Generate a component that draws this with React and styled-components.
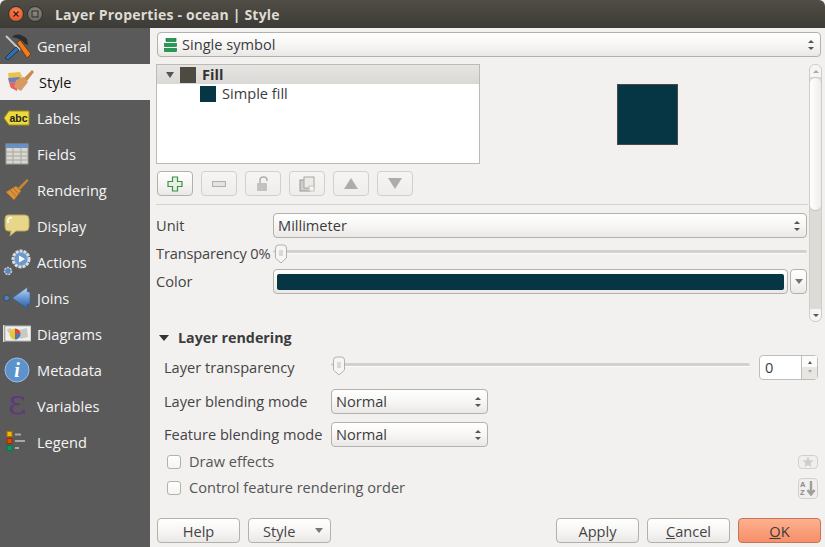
import React from "react";
import styled, { createGlobalStyle } from "styled-components";

const GlobalStyle = createGlobalStyle`
  html, body {
    margin: 0;
    padding: 0;
    background: #f2f1f0;
  }
  body {
    font-family: "Open Sans", "Noto Sans", "DejaVu Sans", sans-serif;
    font-size: 14.6px;
    color: #3c3c3c;
  }
`;

const Window = styled.div`
  width: 825px;
  height: 547px;
  display: flex;
  flex-direction: column;
  overflow: hidden;
  background: #f2f1f0;
`;

const TitleBar = styled.div`
  height: 28px;
  flex: none;
  display: flex;
  align-items: center;
  padding-left: 8px;
  background: linear-gradient(#504d46, #3d3b36);
  border-radius: 6px 6px 0 0;
`;

const WinButton = styled.div`
  width: 16px;
  height: 16px;
  margin-right: 3px;
  border-radius: 50%;
  display: flex;
  align-items: center;
  justify-content: center;
  background: ${(p) => (p.$close ? "radial-gradient(circle at 50% 35%, #f08a5a, #d9481f)" : "radial-gradient(circle at 50% 35%, #8b8984, #64625d)")};
  border: 1px solid #33312d;
  box-sizing: border-box;
`;

const Title = styled.div`
  margin-left: 9px;
  color: #dfdbd2;
  font-weight: 700;
  font-size: 14px;
  letter-spacing: 0.2px;
`;

const Body = styled.div`
  flex: 1;
  display: flex;
  min-height: 0;
`;

const Sidebar = styled.div`
  width: 150px;
  flex: none;
  background: #5a5a5a;
`;

const NavItem = styled.div`
  height: 36px;
  display: flex;
  align-items: center;
  padding-left: ${(p) => (p.$active ? "6px" : "3px")};
  background: ${(p) => (p.$active ? "#f2f1f0" : "transparent")};
  color: ${(p) => (p.$active ? "#111" : "#f4f4f4")};
`;

const NavIcon = styled.div`
  width: 28px;
  height: 28px;
  margin-right: ${(p) => (p.$active ? "5px" : "6px")};
  display: flex;
  align-items: center;
  justify-content: center;
  flex: none;
`;

const Main = styled.div`
  flex: 1;
  min-width: 0;
  display: flex;
  flex-direction: column;
  padding: 4px 4px 4px 6px;
`;

const buttonFace = `
  background: linear-gradient(#ffffff, #f6f5f4 55%, #e9e8e6);
  border: 1px solid #b4b0aa;
  border-radius: 4px;
  box-sizing: border-box;
`;

const Combo = styled.div`
  ${buttonFace}
  height: 25px;
  width: ${(p) => p.$width || "100%"};
  margin-left: ${(p) => p.$left || 0}px;
  display: flex;
  align-items: center;
  padding-left: ${(p) => p.$pad || "4px"};
  padding-right: 6px;
  gap: 4px;
  color: #3c3c3c;
  flex: none;
`;

const ComboText = styled.span`
  flex: 1;
  white-space: nowrap;
  margin-bottom: 2px;
`;

const UpDown = styled.div`
  display: flex;
  flex-direction: column;
  gap: 4px;
`;

const Triangle = styled.div`
  width: 0;
  height: 0;
  flex: none;
  border-left: ${(p) => p.$size || 3}px solid transparent;
  border-right: ${(p) => p.$size || 3}px solid transparent;
  ${(p) => (p.$up ? "border-bottom" : "border-top")}: ${(p) => p.$h || 3}px solid ${(p) => p.$color || "#555"};
`;

const ScrollPanel = styled.div`
  display: flex;
  margin-top: 7px;
  height: 258px;
  flex: none;
`;

const PanelContent = styled.div`
  width: 652px;
  flex: none;
`;

const TreeRow = styled.div`
  display: flex;
  height: 100px;
`;

const Tree = styled.div`
  width: 324px;
  height: 100px;
  box-sizing: border-box;
  background: #fff;
  border: 1px solid #bdbab5;
  flex: none;
`;

const TreeHeader = styled.div`
  height: 19px;
  display: flex;
  align-items: center;
  background: linear-gradient(#e6e5e3, #dad8d5);
  padding-left: 9px;
  font-weight: 700;
  color: #333;
`;

const TreeChild = styled.div`
  height: 19px;
  display: flex;
  align-items: center;
  padding-left: 43px;
  color: #3c3c3c;
`;

const TreeLabel = styled.span`
  margin-bottom: 2px;
`;

const Swatch = styled.div`
  width: 16px;
  height: 16px;
  background: ${(p) => p.$color};
  flex: none;
  margin-left: ${(p) => p.$before || 0}px;
  margin-right: 6px;
`;

const PreviewWrap = styled.div`
  flex: 1;
  display: flex;
  justify-content: center;
  padding-top: 20px;
`;

const Preview = styled.div`
  width: 61px;
  height: 61px;
  margin-left: 6px;
  background: #063543;
  border: 1px solid #4a4a44;
  box-sizing: border-box;
`;

const ToolRow = styled.div`
  display: flex;
  gap: 8px;
  margin: 7px 0 0 1px;
`;

const ToolButton = styled.div`
  ${buttonFace}
  width: 36px;
  height: 25px;
  display: flex;
  align-items: center;
  justify-content: center;
  ${(p) => p.$disabled && "border-color: #d3d0cc; background: linear-gradient(#f6f5f4, #eeedeb);"}
`;

const Separator = styled.div`
  height: 1px;
  background: #d5d3cf;
  margin-top: 8px;
`;

const FormGrid = styled.div`
  display: grid;
  grid-template-columns: 117px 1fr;
  margin-top: 8px;
  padding-right: 1px;
  align-items: center;
`;

const FormLabel = styled.div`
  height: ${(p) => p.$h}px;
  box-sizing: border-box;
  padding-bottom: 2px;
  display: flex;
  align-items: center;
  white-space: nowrap;
  color: #444;
  letter-spacing: ${(p) => (p.$tight ? "-0.15px" : "normal")};
`;

const SliderBox = styled.div`
  position: relative;
  height: ${(p) => p.$h || 31}px;
  display: flex;
  align-items: center;
  flex: 1;
`;

const SliderTrack = styled.div`
  width: 100%;
  height: 3px;
  margin-top: ${(p) => p.$top || 0}px;
  background: #d3d1cd;
  border-bottom: 1px solid #fbfbfa;
  border-radius: 2px;
`;

const Handle = styled.svg`
  position: absolute;
  left: ${(p) => p.$left || 0}px;
  top: ${(p) => p.$top || 0}px;
`;

const ColorRow = styled.div`
  display: flex;
  gap: 2px;
`;

const ColorButton = styled.div`
  ${buttonFace}
  flex: 1;
  height: 25px;
  padding: 4px 3px 3px;
`;

const ColorFill = styled.div`
  height: 100%;
  background: #063543;
  border-radius: 2px;
`;

const ColorDrop = styled.div`
  ${buttonFace}
  width: 17px;
  height: 25px;
  display: flex;
  align-items: center;
  justify-content: center;
`;

const Scrollbar = styled.div`
  width: 13px;
  margin-left: 1px;
  flex: none;
  height: 258px;
  border: 1px solid #cfccc8;
  border-radius: 6px;
  box-sizing: border-box;
  background: #dcdbd8;
  display: flex;
  flex-direction: column;
  overflow: hidden;
`;

const ScrollEnd = styled.div`
  height: 12px;
  flex: none;
  display: flex;
  align-items: center;
  justify-content: center;
  background: #f6f5f4;
`;

const ScrollThumb = styled.div`
  height: 132px;
  flex: none;
  background: linear-gradient(90deg, #fff, #eeedeb);
  border: 1px solid #c6c3bf;
  border-width: 1px 0;
  border-radius: 6px;
`;

const ScrollFill = styled.div`
  flex: 1;
`;

const SectionHeader = styled.div`
  display: flex;
  align-items: center;
  margin: 5px 0 0 3px;
  height: 22px;
  font-weight: 700;
  font-size: 14.3px;
  color: #3c3c3c;
  gap: 9px;
`;

const SectionTitle = styled.span`
  margin-bottom: 2px;
`;

const Section = styled.div`
  padding: 5px 0 0 8px;
  width: 662px;
  box-sizing: border-box;
`;

const Row = styled.div`
  display: flex;
  align-items: center;
  height: ${(p) => p.$h || 33}px;
  margin-top: ${(p) => p.$top || 0}px;
`;

const RowLabel = styled.div`
  width: 167px;
  flex: none;
  white-space: nowrap;
  color: #444;
  margin-bottom: ${(p) => (p.$lift ? "2px" : "0")};
`;

const SpinBox = styled.div`
  width: 59px;
  height: 25px;
  margin-left: 9px;
  box-sizing: border-box;
  background: #fff;
  border: 1px solid #c0bdb8;
  border-radius: 4px;
  display: flex;
  flex: none;
  color: #3c3c3c;
`;

const SpinValue = styled.div`
  flex: 1;
  padding-left: 5px;
  line-height: 23px;
`;

const SpinArrows = styled.div`
  width: 16px;
  border-left: 1px solid #c0bdb8;
  display: flex;
  flex-direction: column;
  align-items: center;
  justify-content: space-around;
  padding: 3px 0;
  box-sizing: border-box;
  background: linear-gradient(#fbfbfa 50%, #e7e6e3 50%);
`;

const CheckRow = styled.div`
  display: flex;
  align-items: center;
  padding-left: 3px;
  height: ${(p) => p.$h}px;
  color: #555;
`;

const CheckBox = styled.div`
  width: 14px;
  height: 14px;
  box-sizing: border-box;
  margin-right: 8px;
  border: 1px solid #b4b0aa;
  border-radius: 3px;
  background: linear-gradient(#fff, #f4f3f2);
`;

const CheckText = styled.span`
  flex: 1;
  margin-bottom: 2px;
`;

const MiniButton = styled.div`
  width: 20px;
  height: ${(p) => p.$h}px;
  box-sizing: border-box;
  border: 1px solid #d3d0cc;
  border-radius: 4px;
  background: #f0efed;
  display: flex;
  align-items: center;
  justify-content: center;
`;

const Footer = styled.div`
  display: flex;
  align-items: center;
  margin-top: auto;
  padding-left: 1px;
  gap: 8px;
`;

const FooterSpacer = styled.div`
  flex: 1;
`;

const PushButton = styled.div`
  ${buttonFace}
  width: 83px;
  height: 25px;
  display: flex;
  align-items: center;
  justify-content: ${(p) => (p.$menu ? "space-between" : "center")};
  padding: ${(p) => (p.$menu ? "0 7px 0 14px" : "0")};
  color: #444;
  ${(p) =>
    p.$primary &&
    "background: linear-gradient(#fdb08f, #f78f68); border-color: #c4765a; color: #3c3c3c;"}
`;

const Key = styled.span`
  text-decoration: underline;
`;

const VariableGlyph = styled.span`
  font-family: "DejaVu Serif", serif;
  font-size: 36px;
  line-height: 28px;
  margin-top: -8px;
  color: #5e3a78;
`;

const GeneralIcon = () => (
  <svg width="28" height="28" viewBox="0 0 28 28">
    <path d="M3 4 L17 18" stroke="#c8c8c8" strokeWidth="2" />
    <path d="M2 26 L13 15 L16 18 L5 28 Z" fill="#2f6fb5" stroke="#123" strokeWidth="0.7" />
    <path d="M9 5 C13 1 19 2 24 7 L25 13 L22 12 C19 8 15 6 9 5 Z" fill="#2c2c2c" />
    <path d="M14 11 L17 8 L28 22 L24 26 Z" fill="#ee7b1c" stroke="#5a2c00" strokeWidth="0.7" />
  </svg>
);

const StyleIcon = () => (
  <svg width="28" height="24" viewBox="0 0 28 24">
    <path d="M2 3 L14 2 L17 8 L12 19 L4 17 Z" fill="#e8c54a" />
    <path d="M2 8 L14 7 L12 13 L3 12 Z" fill="#6d7fc0" />
    <path d="M3 12 L12 13 L11 21 L5 18 Z" fill="#e4626a" />
    <path d="M18 8 L26 0 L28 2 L21 11 Z" fill="#c98a4a" />
    <path d="M10 10 L18 7 L22 12 L15 21 L8 17 Z" fill="#d79a63" />
  </svg>
);

const LabelsIcon = () => (
  <svg width="26" height="16" viewBox="0 0 26 16">
    <path d="M5 1 H25 V15 H5 L0 8 Z" fill="#ecd93e" stroke="#a68d12" />
    <text x="5.5" y="12" fontFamily="Liberation Sans" fontWeight="700" fontSize="10.5" fill="#222">abc</text>
  </svg>
);

const FieldsIcon = () => (
  <svg width="24" height="22" viewBox="0 0 24 22">
    <rect x="1" y="1" width="22" height="20" fill="#d8d8d0" stroke="#9a9a92" />
    <rect x="1" y="1" width="22" height="4" fill="#6a8fc4" />
    <path d="M1 9 H23 M1 13 H23 M1 17 H23 M8 5 V21 M16 5 V21" stroke="#a8a8a0" />
  </svg>
);

const RenderingIcon = () => (
  <svg width="24" height="24" viewBox="0 0 24 24">
    <path d="M13 10 L22 1 L23.500 2.500 L15 12 Z" fill="#c98a2e" />
    <path d="M1 14 L11 8 L16 13 L9 22 Z" fill="#d9913c" stroke="#a86a20" strokeWidth="0.6" />
    <path d="M5 12 L12 19 M8 10 L14 16" stroke="#b0702a" />
  </svg>
);

const DisplayIcon = () => (
  <svg width="26" height="24" viewBox="0 0 26 24">
    <path d="M4 1 H21 Q25 1 25 5 V13 Q25 17 21 17 H12 L6 22 L7 17 H4 Q1 17 1 13 V5 Q1 1 4 1 Z" fill="#e8d68a" stroke="#b8a658" />
    <path d="M4 9 V6 Q4 4 8 3.500" stroke="#fff" strokeWidth="1.500" fill="none" />
  </svg>
);

const ActionsIcon = () => (
  <svg width="28" height="28" viewBox="0 0 28 28">
    <circle cx="18" cy="11" r="8" fill="#6a9ad0" stroke="#dcdcdc" strokeWidth="3" strokeDasharray="3 1" />
    <path d="M16 7.500 L22 11 L16 14.500 Z" fill="#fff" />
    <circle cx="5" cy="23" r="3.500" fill="#5b88c0" stroke="#cfcfcf" strokeWidth="1.500" strokeDasharray="2 1" />
  </svg>
);

const JoinsIcon = () => (
  <svg width="30" height="24" viewBox="0 0 30 24">
    <defs>
      <linearGradient id="joinsFill" x1="0" y1="0" x2="0" y2="1">
        <stop offset="0" stopColor="#c4d8ef" />
        <stop offset="0.55" stopColor="#5f90cf" />
        <stop offset="1" stopColor="#2f5f9c" />
      </linearGradient>
    </defs>
    <circle cx="4" cy="12" r="3" fill="#4a7fc0" stroke="#234" strokeWidth="0.5" />
    <path d="M10 12 L26 0.500 V5 L29 6 V18 L26 19 V23.500 Z" fill="url(#joinsFill)" stroke="#2d5a90" strokeWidth="0.6" />
  </svg>
);

const DiagramsIcon = () => (
  <svg width="28" height="20" viewBox="0 0 28 20">
    <rect x="0" y="1" width="1.500" height="17" fill="#ddd" />
    <rect x="2" y="2" width="26" height="15" fill="#f0f0ee" stroke="#b8b8b4" />
    <path d="M16 6 L24 4 L25 13 L17 15 Z M4 5 L8 4 L9 8 L5 9 Z" fill="#c8c8c4" />
    <circle cx="12" cy="10" r="5.500" fill="#e4c83a" />
    <path d="M12 10 V4.500 A5.500 5.500 0 0 1 17.500 10 Z" fill="#d94a3a" />
    <path d="M12 10 H17.500 A5.500 5.500 0 0 1 12 15.500 Z" fill="#4a78c0" />
  </svg>
);

const MetadataIcon = () => (
  <svg width="26" height="26" viewBox="0 0 26 26">
    <circle cx="13" cy="13" r="12" fill="#5d93cd" stroke="#9dbde0" />
    <text x="13" y="20" textAnchor="middle" fontFamily="Liberation Serif" fontStyle="italic" fontWeight="700" fontSize="20" fill="#fff">i</text>
  </svg>
);

const VariablesIcon = () => <VariableGlyph>ε</VariableGlyph>;

const LegendIcon = () => (
  <svg width="26" height="24" viewBox="0 0 26 24">
    <rect x="3" y="1.500" width="5" height="5" fill="#f7b500" stroke="#a07800" />
    <rect x="3" y="8.500" width="5" height="5" fill="#e8430c" stroke="#903000" />
    <rect x="3" y="15.500" width="5" height="5" fill="#0aa04a" stroke="#075" />
    <path d="M11 4.500 H17 M11 11 H21 M11 18 H15" stroke="#a8a8a8" strokeWidth="2" />
  </svg>
);

const navItems = [
  ["General", GeneralIcon],
  ["Style", StyleIcon],
  ["Labels", LabelsIcon],
  ["Fields", FieldsIcon],
  ["Rendering", RenderingIcon],
  ["Display", DisplayIcon],
  ["Actions", ActionsIcon],
  ["Joins", JoinsIcon],
  ["Diagrams", DiagramsIcon],
  ["Metadata", MetadataIcon],
  ["Variables", VariablesIcon],
  ["Legend", LegendIcon],
];

const Arrows = () => (
  <UpDown>
    <Triangle $up />
    <Triangle />
  </UpDown>
);

const SliderHandle = ({ left, top }) => (
  <Handle $left={left} $top={top} width="12" height="20" viewBox="0 0 12 20">
    <path d="M0.500 4 Q0.500 1 3.500 1 H8.500 Q11.500 1 11.500 4 V14 L6 19 L0.500 14 Z" fill="#f6f5f4" stroke="#b4b0aa" />
    <path d="M4 7 H8 M4 9 H8 M4 11 H8" stroke="#c0bdb8" />
  </Handle>
);

const SymbolIcon = () => (
  <svg width="14" height="14" viewBox="0 0 14 14">
    <rect x="2" y="0.500" width="10" height="3" fill="#1aa050" stroke="#0c6a30" strokeWidth="0.6" />
    <rect x="0.500" y="5.500" width="12" height="3" fill="#1aa050" stroke="#0c6a30" strokeWidth="0.6" />
    <rect x="0.500" y="10.500" width="12" height="3" fill="#1aa050" stroke="#0c6a30" strokeWidth="0.6" />
  </svg>
);

export default function App() {
  return (
    <>
      <GlobalStyle />
      <Window>
        <TitleBar>
          <WinButton $close>
            <svg width="8" height="8" viewBox="0 0 8 8">
              <path d="M1.500 1.500 L6.500 6.500 M6.500 1.500 L1.500 6.500" stroke="#4a1a08" strokeWidth="1.400" />
            </svg>
          </WinButton>
          <WinButton>
            <svg width="8" height="8" viewBox="0 0 8 8">
              <rect x="1" y="1" width="6" height="6" fill="none" stroke="#3c3a36" strokeWidth="1.200" />
            </svg>
          </WinButton>
          <Title>Layer Properties - ocean | Style</Title>
        </TitleBar>
        <Body>
          <Sidebar>
            {navItems.map(([label, Icon]) => (
              <NavItem key={label} $active={label === "Style"}>
                <NavIcon $active={label === "Style"}>
                  <Icon />
                </NavIcon>
                {label}
              </NavItem>
            ))}
          </Sidebar>
          <Main>
            <Combo $width="664px" $left={1} $pad="6px">
              <SymbolIcon />
              <ComboText>Single symbol</ComboText>
              <Arrows />
            </Combo>
            <ScrollPanel>
              <PanelContent>
                <TreeRow>
                  <Tree>
                    <TreeHeader>
                      <Triangle $size={4} $h={6} $color="#555" />
                      <Swatch $color="#4d4a42" $before={6} />
                      <TreeLabel>Fill</TreeLabel>
                    </TreeHeader>
                    <TreeChild>
                      <Swatch $color="#063543" />
                      <TreeLabel>Simple fill</TreeLabel>
                    </TreeChild>
                  </Tree>
                  <PreviewWrap>
                    <Preview />
                  </PreviewWrap>
                </TreeRow>
                <ToolRow>
                  <ToolButton>
                    <svg width="16" height="16" viewBox="0 0 16 16">
                      <path d="M5.500 1 H10.500 V5.500 H15 V10.500 H10.500 V15 H5.500 V10.500 H1 V5.500 H5.500 Z" fill="#e4f2e4" stroke="#3f8f4a" strokeWidth="1.200" />
                    </svg>
                  </ToolButton>
                  <ToolButton $disabled>
                    <svg width="14" height="6" viewBox="0 0 14 6">
                      <rect x="0.500" y="0.500" width="13" height="5" fill="#e4e3e0" stroke="#b0aeaa" />
                    </svg>
                  </ToolButton>
                  <ToolButton $disabled>
                    <svg width="14" height="16" viewBox="0 0 14 16">
                      <path d="M4 7 V4 Q4 1 7.500 1 Q11 1 11 4 V5" fill="none" stroke="#b0aeaa" strokeWidth="1.500" />
                      <rect x="1" y="7" width="10" height="8" rx="1" fill="#c4c2be" />
                    </svg>
                  </ToolButton>
                  <ToolButton $disabled>
                    <svg width="16" height="16" viewBox="0 0 16 16">
                      <rect x="1" y="4" width="10" height="11" fill="#cfcdc9" stroke="#9a9894" />
                      <rect x="5" y="1" width="10" height="11" fill="#ecebe8" stroke="#aaa8a4" />
                      <rect x="10" y="10" width="5" height="5" fill="#f6f5f4" stroke="#c4c2be" />
                    </svg>
                  </ToolButton>
                  <ToolButton $disabled>
                    <Triangle $up $size={7} $h={11} $color="#aeaca8" />
                  </ToolButton>
                  <ToolButton $disabled>
                    <Triangle $size={7} $h={11} $color="#aeaca8" />
                  </ToolButton>
                </ToolRow>
                <Separator />
                <FormGrid>
                  <FormLabel $h={25}>Unit</FormLabel>
                  <Combo>
                    <ComboText>Millimeter</ComboText>
                    <Arrows />
                  </Combo>
                  <FormLabel $h={31} $tight>Transparency 0%</FormLabel>
                  <SliderBox>
                    <SliderTrack $top={-3} />
                    <SliderHandle left={2} top={6} />
                  </SliderBox>
                  <FormLabel $h={25}>Color</FormLabel>
                  <ColorRow>
                    <ColorButton>
                      <ColorFill />
                    </ColorButton>
                    <ColorDrop>
                      <Triangle $size={4} $h={5} $color="#777" />
                    </ColorDrop>
                  </ColorRow>
                </FormGrid>
              </PanelContent>
              <Scrollbar>
                <ScrollEnd>
                  <Triangle $up $color="#aaa" />
                </ScrollEnd>
                <ScrollThumb />
                <ScrollFill />
                <ScrollEnd>
                  <Triangle $color="#555" />
                </ScrollEnd>
              </Scrollbar>
            </ScrollPanel>
            <SectionHeader>
              <Triangle $size={5} $h={6} $color="#333" />
              <SectionTitle>Layer rendering</SectionTitle>
            </SectionHeader>
            <Section>
              <Row $h={26}>
                <RowLabel>Layer transparency</RowLabel>
                <SliderBox $h={26}>
                  <SliderTrack $top={-5} />
                  <SliderHandle left={2} top={2} />
                </SliderBox>
                <SpinBox>
                  <SpinValue>0</SpinValue>
                  <SpinArrows>
                    <Triangle $up $size={2.5} $color="#555" />
                    <Triangle $size={2.5} $color="#aaa" />
                  </SpinArrows>
                </SpinBox>
              </Row>
              <Row $h={33} $top={5}>
                <RowLabel $lift>Layer blending mode</RowLabel>
                <Combo $width="157px">
                  <ComboText>Normal</ComboText>
                  <Arrows />
                </Combo>
              </Row>
              <Row $h={33}>
                <RowLabel $lift>Feature blending mode</RowLabel>
                <Combo $width="157px">
                  <ComboText>Normal</ComboText>
                  <Arrows />
                </Combo>
              </Row>
              <CheckRow $h={22}>
                <CheckBox />
                <CheckText>Draw effects</CheckText>
                <MiniButton $h={14}>
                  <svg width="12" height="12" viewBox="0 0 12 12">
                    <path d="M6 0.500 L7.700 4.200 L11.500 4.600 L8.600 7.200 L9.500 11 L6 9 L2.500 11 L3.400 7.200 L0.500 4.600 L4.300 4.200 Z" fill="#d0cecb" />
                  </svg>
                </MiniButton>
              </CheckRow>
              <CheckRow $h={30}>
                <CheckBox />
                <CheckText>Control feature rendering order</CheckText>
                <MiniButton $h={21}>
                  <svg width="16" height="16" viewBox="0 0 16 16">
                    <text x="0" y="7" fontFamily="Liberation Sans" fontWeight="700" fontSize="7.500" fill="#888">A</text>
                    <text x="0" y="15" fontFamily="Liberation Sans" fontWeight="700" fontSize="7.500" fill="#888">Z</text>
                    <path d="M11 1 V14 M7.500 10 L11 14.500 L14.500 10" fill="none" stroke="#a09e9a" strokeWidth="2.400" />
                  </svg>
                </MiniButton>
              </CheckRow>
            </Section>
            <Footer>
              <PushButton>Help</PushButton>
              <PushButton $menu>
                Style
                <Triangle $size={4} $h={5} $color="#777" />
              </PushButton>
              <FooterSpacer />
              <PushButton>Apply</PushButton>
              <PushButton>
                <span>
                  <Key>C</Key>ancel
                </span>
              </PushButton>
              <PushButton $primary>
                <span>
                  <Key>O</Key>K
                </span>
              </PushButton>
            </Footer>
          </Main>
        </Body>
      </Window>
    </>
  );
}
